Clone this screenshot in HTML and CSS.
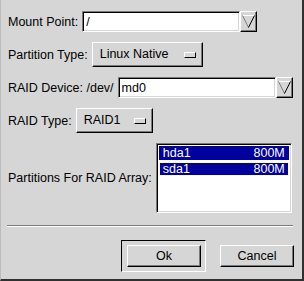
FILE: index.html
```html
<!DOCTYPE html>
<html>
<head>
    <title>Make RAID Device</title>
    <link rel="stylesheet" href="styles.css">
</head>
<body>
    <div class="dialog">
        <div class="form">
            <!-- Mount point -->
            <div class="row">
                <span class="label">Mount Point:</span>
                <div class="combo">
                    <div class="entry">/</div>
                    <div class="drop">
                        <svg width="13" height="13" viewBox="0 0 13 13">
                            <line x1="0.5" y1="0.5" x2="12.5" y2="0.5" stroke="#fff"/>
                            <line x1="0.5" y1="0.5" x2="6.5" y2="12.5" stroke="#7b7b7b"/>
                            <line x1="12.5" y1="0.5" x2="6.5" y2="12.5" stroke="#000"/>
                        </svg>
                    </div>
                </div>
            </div>

            <!-- Partition type -->
            <div class="row">
                <span class="label">Partition Type:</span>
                <div class="option option-wide">
                    <span>Linux Native</span>
                    <span class="indicator"></span>
                </div>
            </div>

            <!-- RAID device -->
            <div class="row">
                <span class="label">RAID Device: /dev/</span>
                <div class="combo">
                    <div class="entry">md0</div>
                    <div class="drop">
                        <svg width="13" height="13" viewBox="0 0 13 13">
                            <line x1="0.5" y1="0.5" x2="12.5" y2="0.5" stroke="#fff"/>
                            <line x1="0.5" y1="0.5" x2="6.5" y2="12.5" stroke="#7b7b7b"/>
                            <line x1="12.5" y1="0.5" x2="6.5" y2="12.5" stroke="#000"/>
                        </svg>
                    </div>
                </div>
            </div>

            <!-- RAID type -->
            <div class="row">
                <span class="label">RAID Type:</span>
                <div class="option option-narrow">
                    <span>RAID1</span>
                    <span class="indicator"></span>
                </div>
            </div>

            <!-- Member partitions -->
            <div class="row">
                <span class="label">Partitions For RAID Array:</span>
                <div class="list">
                    <div class="list-row selected"><span>hda1</span><span>800M</span></div>
                    <div class="list-row selected focused"><span>sda1</span><span>800M</span></div>
                </div>
            </div>
        </div>

        <div class="separator"></div>

        <div class="actions">
            <div class="default-frame">
                <div class="btn">Ok</div>
            </div>
            <div class="btn">Cancel</div>
        </div>
    </div>
</body>
</html>
```

FILE: styles.css
```css
body {
    margin: 0;
    font-family: "Liberation Sans", Arial, sans-serif;
    font-size: 12.5px;
    color: #000;
    background: #d6d6d6;
}
.dialog {
    width: 304px;
    height: 281px;
    box-sizing: border-box;
    background-color: #d6d6d6;
    border-right: 2px solid #303030;
    border-bottom: 2px solid #303030;
    border-left: 1px solid #bcbcbc;
}
.form {
    display: flex;
    flex-direction: column;
    gap: 10px;
    padding: 11px 0 0 7px;
}
.row {
    display: flex;
    align-items: center;
    gap: 4px;
}
.label {
    white-space: nowrap;
}

/* Entry + dropdown combo */
.combo {
    display: flex;
    height: 21px;
}
.entry {
    width: 158px;
    box-sizing: border-box;
    background: #fff;
    border-top: 1px solid #7b7b7b;
    border-left: 1px solid #7b7b7b;
    border-bottom: 1px solid #fff;
    border-right: 1px solid #fff;
    box-shadow: inset 1px 1px 0 #000, inset -1px -1px 0 #d6d6d6;
    padding: 3px 0 0 3px;
    line-height: 14px;
}
.drop {
    width: 17px;
    box-sizing: border-box;
    border-top: 1px solid #fff;
    border-left: 1px solid #fff;
    border-bottom: 1px solid #000;
    border-right: 1px solid #000;
    box-shadow: inset -1px -1px 0 #7b7b7b;
    display: flex;
    align-items: center;
    justify-content: center;
    padding-bottom: 1px;
}

/* Option menu buttons */
.option {
    display: flex;
    align-items: center;
    justify-content: space-between;
    box-sizing: border-box;
    height: 25px;
    padding: 0 6px 2px 7px;
    border-top: 1px solid #fff;
    border-left: 1px solid #fff;
    border-bottom: 1px solid #000;
    border-right: 1px solid #000;
    box-shadow: inset -1px -1px 0 #7b7b7b;
}
.option-wide {
    width: 111px;
}
.option-narrow {
    width: 77px;
}
.indicator {
    width: 12px;
    height: 6px;
    box-sizing: border-box;
    border-top: 1px solid #fff;
    border-left: 1px solid #fff;
    border-bottom: 1px solid #000;
    border-right: 1px solid #000;
    margin-top: 2px;
}

/* Partition list */
.list {
    width: 136px;
    height: 70px;
    box-sizing: border-box;
    background: #fff;
    border-top: 1px solid #7b7b7b;
    border-left: 1px solid #7b7b7b;
    border-bottom: 1px solid #fff;
    border-right: 1px solid #fff;
    box-shadow: inset 1px 1px 0 #000, inset -1px -1px 0 #d6d6d6;
    padding: 2px 2px 0 2px;
    display: flex;
    flex-direction: column;
    gap: 2px;
}
.list-row {
    display: flex;
    justify-content: space-between;
    height: 14px;
    line-height: 14px;
    padding: 0 4px 0 4px;
    box-sizing: border-box;
}
.selected {
    background: #00009c;
    color: #fff;
}
.focused {
    border: 1px solid #ffffa8;
    line-height: 12px;
    padding: 0 3px;
}

.separator {
    margin: 12px 9px 0 6px;
    height: 1px;
    background: #7b7b7b;
    border-bottom: 1px solid #fff;
}

/* Dialog buttons */
.actions {
    display: flex;
    justify-content: flex-end;
    align-items: center;
    gap: 14px;
    padding: 13px 8px 0 0;
}
.default-frame {
    padding: 4px 4px 4px 5px;
    border-top: 1px solid #000;
    border-left: 1px solid #000;
    border-bottom: 1px solid #fff;
    border-right: 1px solid #fff;
}
.btn {
    width: 74px;
    height: 22px;
    box-sizing: border-box;
    border-top: 1px solid #fff;
    border-left: 1px solid #fff;
    border-bottom: 1px solid #000;
    border-right: 1px solid #000;
    box-shadow: inset -1px -1px 0 #7b7b7b;
    display: flex;
    align-items: center;
    justify-content: center;
    padding-bottom: 1px;
}
```
